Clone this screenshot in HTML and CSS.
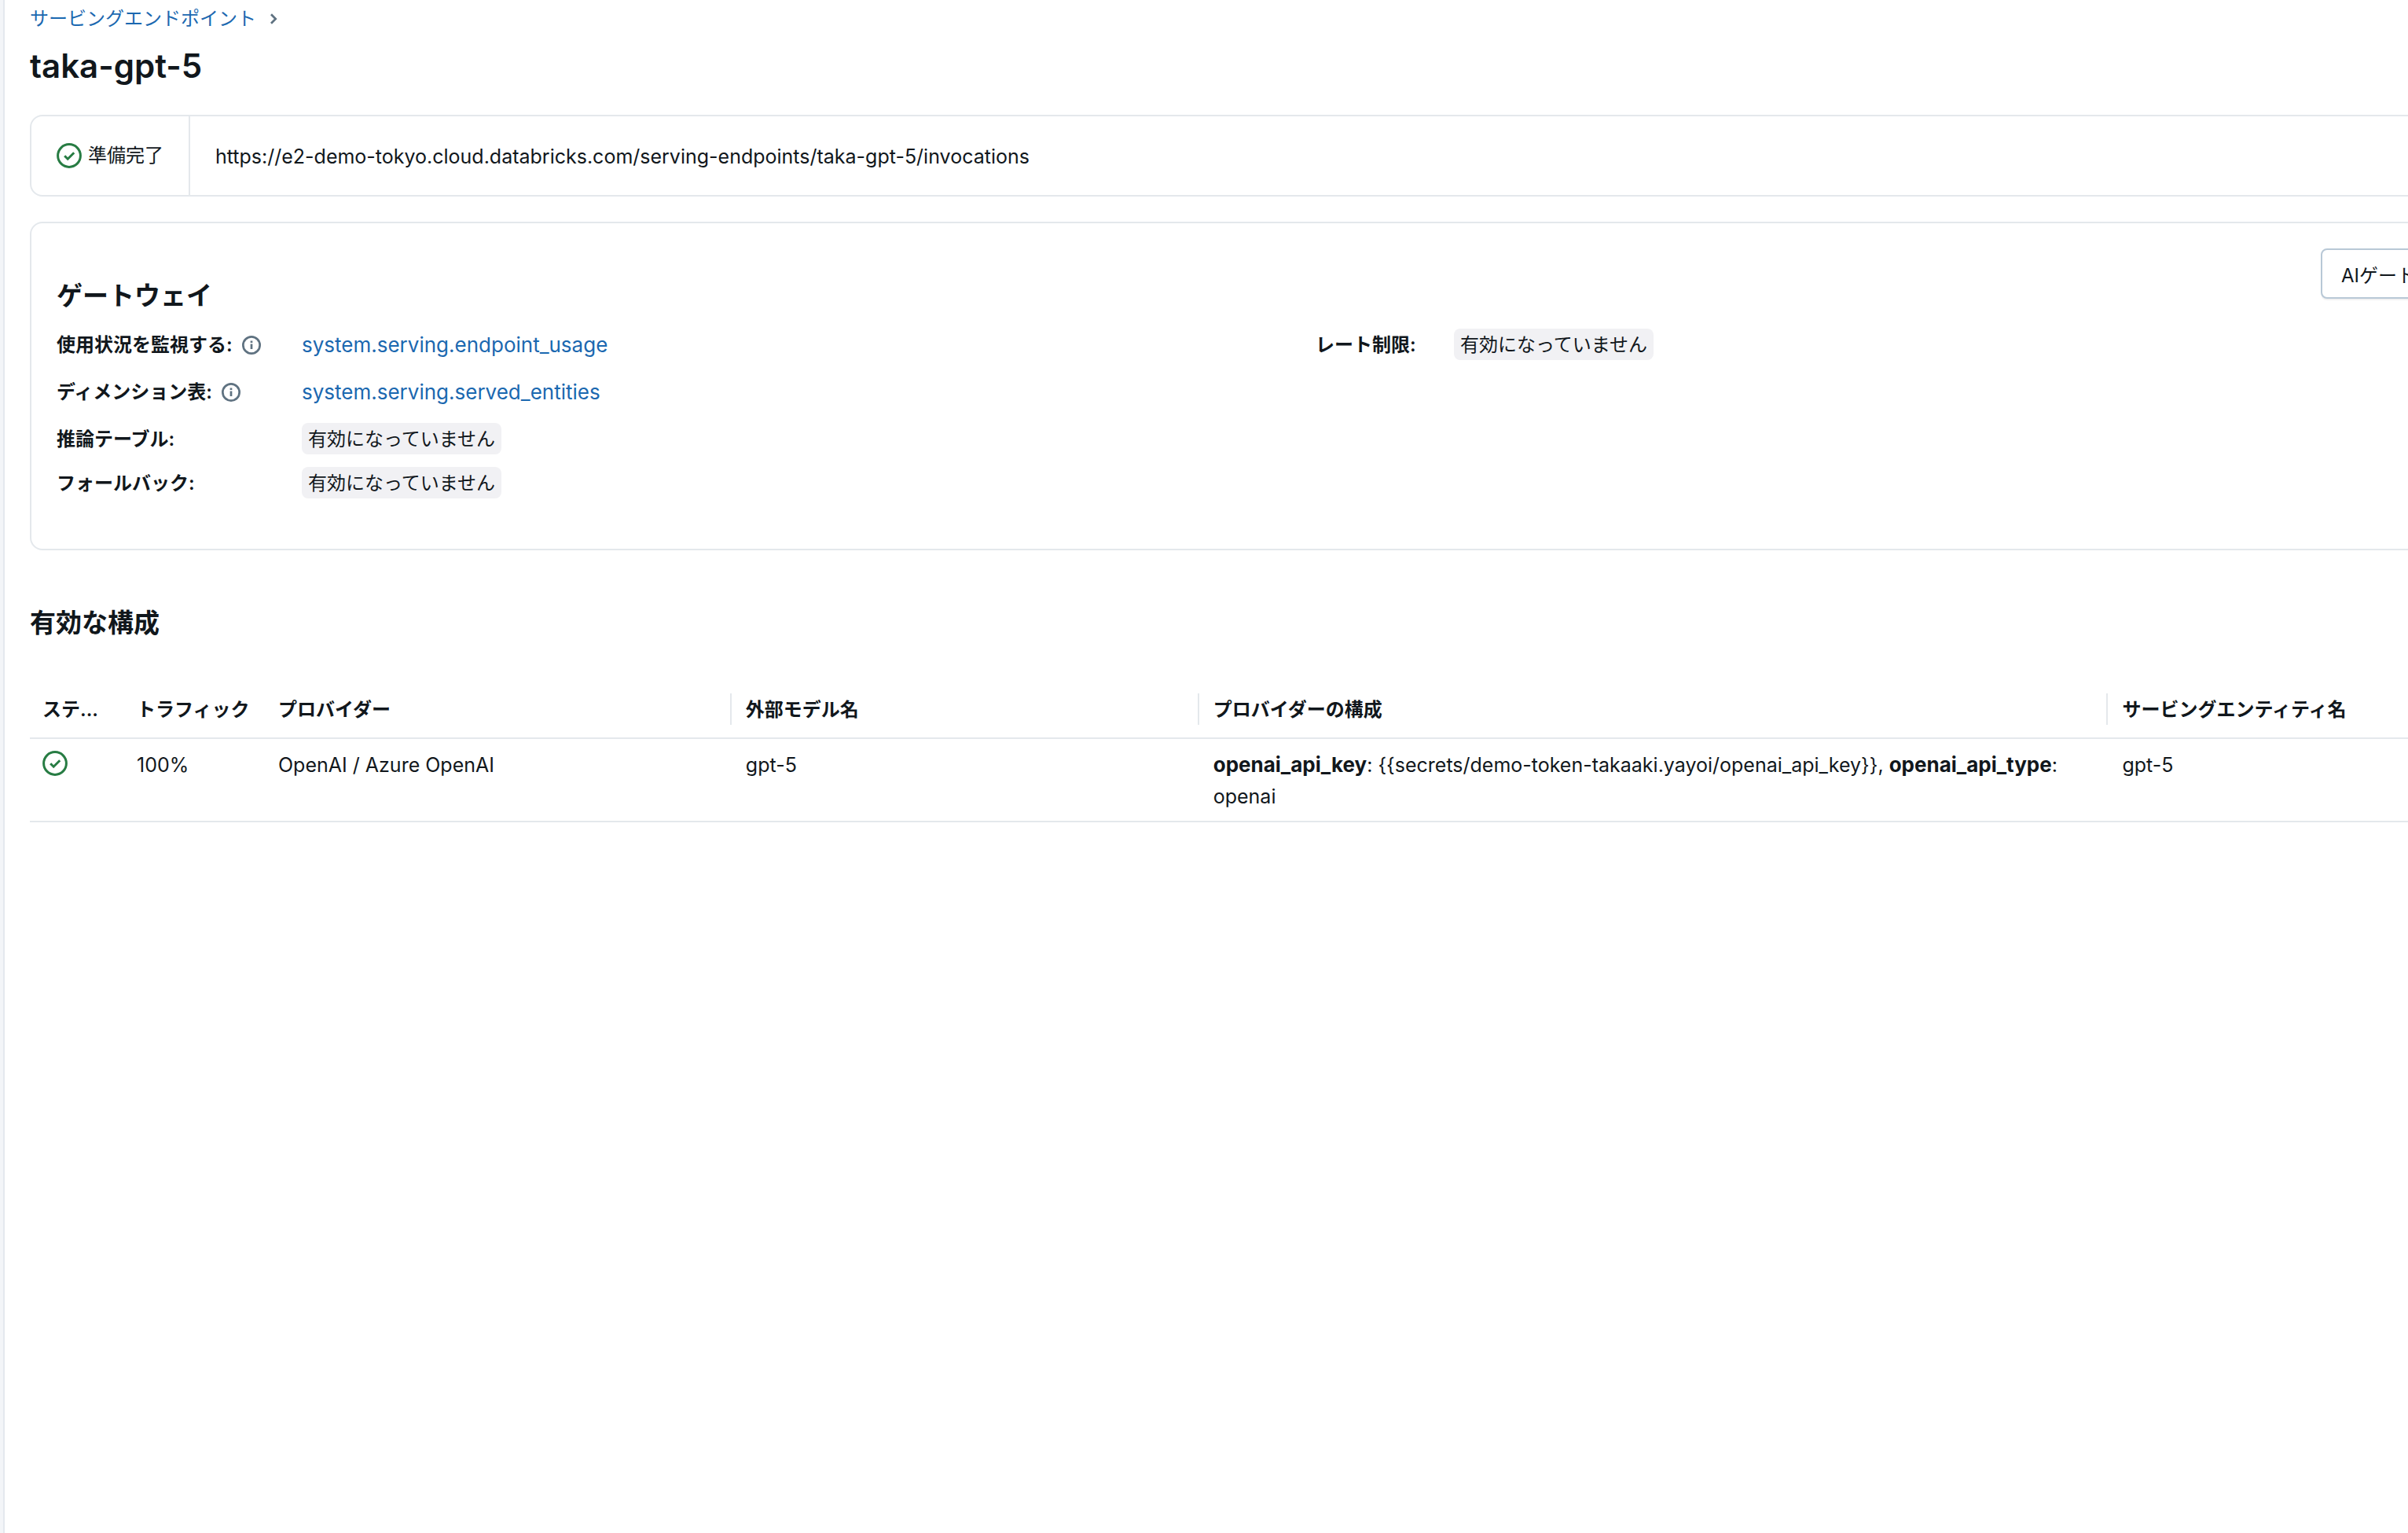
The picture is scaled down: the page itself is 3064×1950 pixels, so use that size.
FILE: index.html
```html
<!DOCTYPE html>
<html lang="ja">
<head>
<meta charset="UTF-8">
<meta name="viewport" content="width=device-width, initial-scale=1.0">
<title>taka-gpt-5</title>
<link rel="stylesheet" href="styles.css">
</head>
<body>

<main class="page">
  <nav class="breadcrumb">
    <a href="#" class="ja">サービングエンドポイント</a>
    <svg class="chevron" viewBox="0 0 16 16"><path d="M6 4.2l3.8 3.8L6 11.8" fill="none" stroke="currentColor" stroke-width="1.8"/></svg>
  </nav>
  <h1>taka-gpt-5</h1>

  <!-- Endpoint status -->
  <section class="status-bar">
    <div class="status ja">
      <svg class="icon-check" viewBox="0 0 16 16"><circle cx="8" cy="8" r="7.2"/><path d="M5.1 8.1l2 2 4-4"/></svg>
      準備完了
    </div>
    <div class="endpoint-url">https://e2-demo-tokyo.cloud.databricks.com/serving-endpoints/taka-gpt-5/invocations</div>
  </section>

  <!-- Gateway -->
  <section class="gateway">
    <button class="button ja" type="button">AIゲートウェイを編集</button>
    <h2>ゲートウェイ</h2>
    <div class="gateway-columns">
      <dl class="details">
        <dt>使用状況を監視する: <svg class="icon-info" viewBox="0 0 16 16"><circle cx="8" cy="8" r="7.1"/><path d="M8 7v4.4M8 4.3v1.7"/></svg></dt>
        <dd class="row-link"><a href="#">system.serving.endpoint_usage</a></dd>
        <dt>ディメンション表: <svg class="icon-info" viewBox="0 0 16 16"><circle cx="8" cy="8" r="7.1"/><path d="M8 7v4.4M8 4.3v1.7"/></svg></dt>
        <dd class="row-link"><a href="#">system.serving.served_entities</a></dd>
        <dt>推論テーブル:</dt>
        <dd><span class="tag">有効になっていません</span></dd>
        <dt>フォールバック:</dt>
        <dd><span class="tag">有効になっていません</span></dd>
      </dl>
      <dl class="details details-limits">
        <dt>レート制限:</dt>
        <dd><span class="tag">有効になっていません</span></dd>
      </dl>
    </div>
  </section>

  <!-- Active configuration -->
  <h2>有効な構成</h2>
  <table class="config">
    <colgroup>
      <col class="col-status">
      <col class="col-traffic">
      <col class="col-name">
      <col class="col-name">
      <col class="col-config">
      <col>
    </colgroup>
    <thead>
      <tr>
        <th><span>ステ...</span></th>
        <th><span>トラフィック</span></th>
        <th class="resizable"><span>プロバイダー</span></th>
        <th class="resizable"><span>外部モデル名</span></th>
        <th class="resizable"><span>プロバイダーの構成</span></th>
        <th><span>サービングエンティティ名</span></th>
      </tr>
    </thead>
    <tbody>
      <tr>
        <td><svg class="icon-check" viewBox="0 0 16 16"><circle cx="8" cy="8" r="7.2"/><path d="M5.1 8.1l2 2 4-4"/></svg></td>
        <td>100%</td>
        <td>OpenAI / Azure OpenAI</td>
        <td>gpt-5</td>
        <td><b>openai_api_key</b>: {{secrets/demo-token-takaaki.yayoi/openai_api_key}}, <b>openai_api_type</b>: openai</td>
        <td>gpt-5</td>
      </tr>
    </tbody>
  </table>
</main>

</body>
</html>
```
FILE: styles.css
```css
* {
    box-sizing: border-box;
}

body {
    margin: 0;
    min-height: 100vh;
    overflow: hidden;
    background-color: #fff;
    border-left: 4px solid #f3f5f8;
    color: #11171c;
    font-family: Inter, "Noto Sans CJK JP", sans-serif;
    font-size: 25px;
    line-height: 40px;
}

/* the page runs on past the right edge of the window */
.page {
    width: calc(100% + 246px);
    min-height: 100vh;
    padding: 4px 32px 0;
    border-left: 2px solid #e4e8ee;
}

a {
    color: #1b68b0;
    text-decoration: none;
}

a:hover {
    text-decoration: underline;
}

h1, h2 {
    margin: 0;
    font-weight: 600;
}

h1 {
    margin: 12px 0 34px;
    font-size: 42px;
    line-height: 56px;
}

h2 {
    font-size: 33px;
    line-height: 48px;
}

.ja {
    font-size: 24px;
}

.breadcrumb {
    display: flex;
    align-items: center;
    gap: 10px;
}

.chevron {
    width: 24px;
    height: 24px;
    color: #5f7281;
}

.icon-check, .icon-info {
    flex: none;
    fill: none;
}

.icon-check {
    display: block;
    width: 32px;
    height: 32px;
    stroke: #277c43;
    stroke-width: 1.5;
}

.icon-info {
    width: 24px;
    height: 24px;
    stroke: #5f7281;
    stroke-width: 1.8;
}

.status-bar {
    display: flex;
    height: 104px;
    border: 2px solid #e4e8ec;
    border-radius: 16px;
}

.status {
    display: flex;
    align-items: center;
    gap: 8px;
    padding: 0 32px;
    border-right: 2px solid #e4e8ec;
}

.endpoint-url {
    padding: 31px 32px 29px;
}

.gateway {
    display: flex;
    flex-direction: column;
    margin: 32px 0 68px;
    padding: 32px 32px 64px;
    border: 2px solid #e4e8ec;
    border-radius: 16px;
}

.gateway h2 {
    margin: -28px 0 18px;
}

.button {
    align-self: flex-end;
    height: 64px;
    padding: 0 24px;
    border: 2px solid #b8c8d6;
    border-radius: 8px;
    background-color: #fff;
    box-shadow: 0 2px 0 rgba(0, 0, 0, 0.05);
    color: inherit;
    font-family: inherit;
    cursor: pointer;
}

.gateway-columns {
    display: grid;
    grid-template-columns: 1fr 1fr;
    gap: 32px;
}

.details {
    display: grid;
    grid-template-columns: 296px 1fr;
    column-gap: 16px;
    row-gap: 16px;
    align-content: start;
    margin: 0;
}

.details-limits {
    grid-template-columns: 160px 1fr;
}

.details dt {
    display: flex;
    align-items: center;
    gap: 12px;
    height: 42px;
    margin-bottom: -2px;
    font-size: 24px;
    font-weight: 600;
}

.details dd {
    margin: 0;
}

.row-link {
    padding: 1px 0 3px;
    font-size: 26px;
}

.tag {
    display: inline-block;
    height: 40px;
    padding: 0 8px;
    border-radius: 8px;
    background-color: #f1f1f4;
    font-size: 24px;
    line-height: 42px;
    vertical-align: top;
}

.config {
    width: 100%;
    margin-top: 50px;
    border-collapse: separate;
    border-spacing: 0;
    table-layout: fixed;
}

.col-status {
    width: 120px;
}

.col-traffic {
    width: 180px;
}

.col-name {
    width: 18.36%;
}

.col-config {
    width: 35.7%;
}

.config th, .config td {
    padding: 13px 16px 11px;
    border-bottom: 2px solid #e4e8ec;
    text-align: left;
    vertical-align: top;
}

.config th {
    padding: 16px 0;
    font-size: 24px;
    font-weight: 600;
}

.config th span {
    display: block;
    height: 40px;
    padding-left: 16px;
    line-height: 42px;
}

.config .resizable span {
    margin-right: 2px;
    border-right: 2px solid #e4e8ec;
}

.config b {
    font-size: 26px;
    font-weight: 700;
    line-height: 1;
}

.config .icon-check {
    margin: 2px 0;
}
```
